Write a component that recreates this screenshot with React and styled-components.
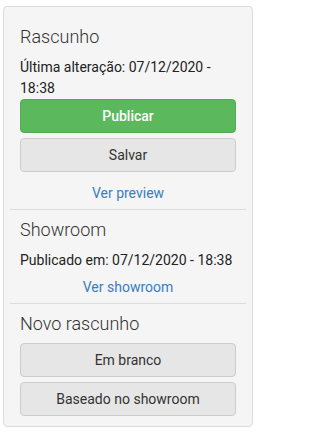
import React from 'react';
import styled, { createGlobalStyle } from 'styled-components';

const LINK_COLOR = '#3a7dc1';

const App = () => {
  return (
    <>
      <PageStyle />
      <Panel>
        <Section>
          <Title>Rascunho</Title>
          <Info>Última alteração: 07/12/2020 - 18:38</Info>
          <ButtonStack>
            <Button variant='success'>Publicar</Button>
            <Button>Salvar</Button>
          </ButtonStack>
          <LinkRow afterButtons>
            <Link href='#'>Ver preview</Link>
          </LinkRow>
        </Section>
        <Section>
          <Title>Showroom</Title>
          <Info>Publicado em: 07/12/2020 - 18:38</Info>
          <LinkRow>
            <Link href='#'>Ver showroom</Link>
          </LinkRow>
        </Section>
        <Section last>
          <Title>Novo rascunho</Title>
          <ButtonStack>
            <Button>Em branco</Button>
            <Button>Baseado no showroom</Button>
          </ButtonStack>
        </Section>
      </Panel>
    </>
  );
};

export default App;

const PageStyle = createGlobalStyle({
  body: {
    margin: 0,
    padding: '6px 0 0 3px',
    backgroundColor: '#fff',
    fontFamily: 'Roboto, "Liberation Sans", sans-serif',
    color: '#333',
  },
  '*': {
    boxSizing: 'border-box',
  },
});

const Panel = styled.div({
  width: 250,
  backgroundColor: '#f5f5f5',
  border: '1px solid #dcdcdc',
  borderRadius: 4,
  padding: '10px 6px 10px',
});

const Section = styled.div(({ last }) => ({
  padding: '0 10px',
  borderBottom: last ? 'none' : '1px solid #dcdcdc',
}));

const Title = styled.h4({
  margin: '10px 0',
  fontSize: 18,
  fontWeight: 300,
  lineHeight: 1.1,
  color: '#333',
});

const Info = styled.p({
  margin: 0,
  fontSize: 14,
  lineHeight: '21px',
  color: '#222',
});

const ButtonStack = styled.div({
  display: 'flex',
  flexDirection: 'column',
  gap: 5,
});

const Button = styled.button(({ variant }) => ({
  display: 'block',
  width: '100%',
  height: 34,
  padding: '6px 12px',
  fontFamily: 'Roboto, "Liberation Sans", sans-serif',
  fontSize: 14,
  lineHeight: '20px',
  fontWeight: variant === 'success' ? 500 : 400,
  borderRadius: 4,
  cursor: 'pointer',
  color: variant === 'success' ? '#fff' : '#333',
  backgroundColor: variant === 'success' ? '#5cb85c' : '#e6e6e6',
  border: `1px solid ${variant === 'success' ? '#4cae4c' : '#cccccc'}`,
}));

const LinkRow = styled.div(({ afterButtons }) => ({
  padding: `${afterButtons ? 11 : 6}px 0 5px`,
  textAlign: 'center',
  fontSize: 14,
  lineHeight: '21px',
}));

const Link = styled.a({
  color: LINK_COLOR,
  textDecoration: 'none',
});
